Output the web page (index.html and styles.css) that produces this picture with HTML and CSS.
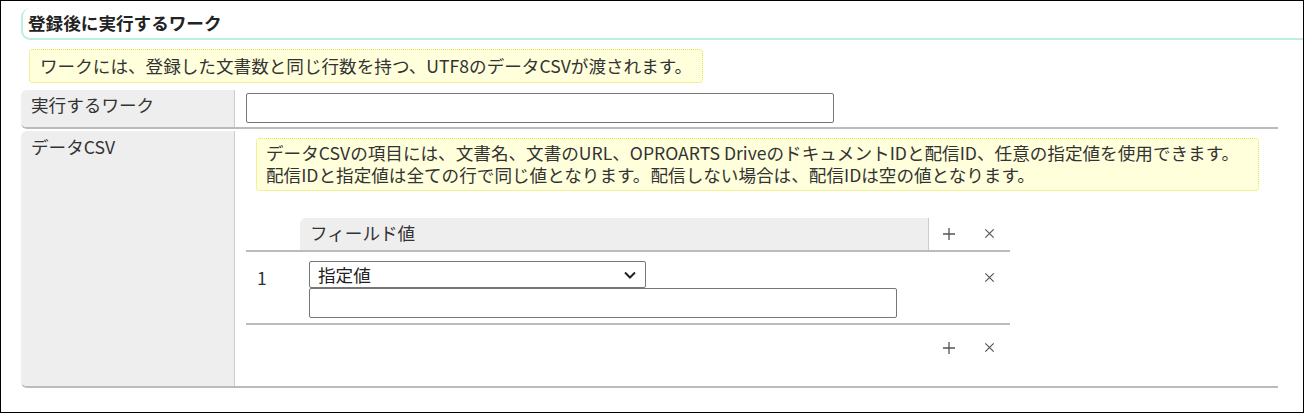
FILE: index.html
```html
<!DOCTYPE html>
<html lang="ja">
<head>
<meta charset="utf-8">
<title>登録後に実行するワーク</title>
<link rel="stylesheet" href="styles.css">
</head>
<body>
<div class="frame">
  <div class="heading"><span class="heading-text">登録後に実行するワーク</span></div>
  <div class="note note-main">ワークには、登録した文書数と同じ行数を持つ、UTF8のデータCSVが渡されます。</div>
  <div class="form">
    <div class="row row-work">
      <div class="label">実行するワーク</div>
      <div class="value"><div class="textbox textbox-work"></div></div>
    </div>
    <div class="row row-csv">
      <div class="label">データCSV</div>
      <div class="value">
        <div class="note note-csv"><div class="note-line">データCSVの項目には、文書名、文書のURL、OPROARTS DriveのドキュメントIDと配信ID、任意の指定値を使用できます。</div><div class="note-line">配信IDと指定値は全ての行で同じ値となります。配信しない場合は、配信IDは空の値となります。</div></div>
        <div class="fields">
          <div class="frow fhead">
            <div class="fnum"></div>
            <div class="fname">フィールド値</div>
            <div class="fbtn"><svg class="ico" viewBox="0 0 14 14"><path d="M7 1V13M1 7H13"/></svg></div>
            <div class="fbtn"><svg class="ico ico-x" viewBox="0 0 14 14"><path d="M2.5 2.5L11.5 11.5M11.5 2.5L2.5 11.5"/></svg></div>
          </div>
          <div class="frow fitem">
            <div class="fnum">1</div>
            <div class="fval">
              <div class="select"><span>指定値</span><svg class="chev" viewBox="0 0 14 10"><path d="M2 2.5L7 7.5L12 2.5"/></svg></div>
              <div class="textbox textbox-field"></div>
            </div>
            <div class="fbtn"></div>
            <div class="fbtn"><svg class="ico ico-x" viewBox="0 0 14 14"><path d="M2.5 2.5L11.5 11.5M11.5 2.5L2.5 11.5"/></svg></div>
          </div>
          <div class="frow ffoot">
            <div class="fnum"></div>
            <div class="fspace"></div>
            <div class="fbtn"><svg class="ico" viewBox="0 0 14 14"><path d="M7 1V13M1 7H13"/></svg></div>
            <div class="fbtn"><svg class="ico ico-x" viewBox="0 0 14 14"><path d="M2.5 2.5L11.5 11.5M11.5 2.5L2.5 11.5"/></svg></div>
          </div>
        </div>
      </div>
    </div>
  </div>
</div>
</body>
</html>
```

FILE: styles.css
```css
* { box-sizing: border-box; }
html, body { margin: 0; padding: 0; background: #fff; }
body {
  font-family: "Noto Sans CJK JP", "Noto Sans", sans-serif;
  font-size: 17.6px;
  color: #333;
}
.frame {
  width: 1304px;
  height: 413px;
  border: 1px solid #000;
  padding: 7px 0 0 20px;
  overflow: hidden;
}
.heading {
  height: 32px;
  border-left: 2px solid #bdeedf;
  border-bottom: 2px solid #bdeedf;
  border-radius: 9px 0 0 9px;
  padding-left: 5px;
  display: flex;
  align-items: center;
}
.heading-text {
  font-weight: bold;
  color: #222;
  line-height: 1;
}
.note {
  background: #ffffdc;
  border: 1px dotted #e3e34a;
  border-radius: 4px;
  color: #333;
}
.note-main {
  display: inline-block;
  margin: 9px 0 0 8px;
  height: 34px;
  line-height: 31px;
  padding: 0 10px;
}
.form {
  width: 1257px;
  margin-top: 7px;
  display: flex;
  flex-direction: column;
  gap: 2px;
}
.row {
  display: flex;
  border-bottom: 2px solid #bbb;
  border-radius: 0 0 0 6px;
}
.label {
  width: 214px;
  flex: none;
  background: #eee;
  border-right: 1px solid #ccc;
  border-radius: 6px 0 0 6px;
  padding: 0 0 0 10px;
  line-height: 1;
}
.row-work { height: 39px; }
.row-work .label { display: flex; align-items: center; padding-bottom: 7px; }
.row-work .value { padding: 3px 0 0 11px; }
.row-csv { height: 257px; }
.row-csv .label { padding-top: 7px; }
.row-csv .value { padding: 7px 0 0 11px; }
.value { flex: 1; }
.textbox {
  border: 1px solid #767676;
  border-radius: 2px;
  background: #fff;
}
.textbox-work { width: 588px; height: 30px; }
.note-csv {
  margin-left: 10px;
  width: 1003px;
  height: 53px;
  padding: 3px 0 0 9px;
}
.note-line {
  height: 22px;
  line-height: 22px;
  white-space: nowrap;
}
.fields {
  width: 764px;
  margin-top: 27px;
}
.frow {
  display: flex;
  border-bottom: 2px solid #bbb;
}
.fnum {
  width: 54px;
  flex: none;
  padding-left: 11px;
}
.fhead { height: 34px; }
.fname {
  width: 629px;
  flex: none;
  background: #eee;
  border-right: 1px solid #ccc;
  border-radius: 6px 0 0 0;
  padding: 2px 0 0 10px;
  color: #333;
}
.fbtn {
  width: 40px;
  flex: none;
  display: flex;
  justify-content: center;
  align-items: center;
}
.fhead .fbtn { padding-bottom: 1px; }
.ico {
  width: 14px;
  height: 14px;
  fill: none;
  stroke: #555;
  stroke-width: 1.3;
}
.ico-x { width: 13px; height: 13px; }
.fitem { height: 73px; }
.fitem .fnum { padding-top: 14px; line-height: 1.4; }
.fitem .fbtn { align-items: flex-start; padding-top: 19px; }
.fval {
  width: 629px;
  flex: none;
  padding: 9px 0 0 9px;
}
.select {
  width: 337px;
  height: 27px;
  border: 1px solid #767676;
  border-radius: 2px;
  display: flex;
  align-items: center;
  justify-content: space-between;
  padding: 0 8px 0 8px;
  color: #222;
  line-height: 1;
}
.chev {
  width: 14px;
  height: 10px;
  fill: none;
  stroke: #222;
  stroke-width: 2;
}
.textbox-field { width: 588px; height: 30px; }
.ffoot { height: 46px; border-bottom: none; }
.fspace { width: 629px; flex: none; }
.ffoot .fbtn { align-items: flex-start; padding-top: 16px; }
```
